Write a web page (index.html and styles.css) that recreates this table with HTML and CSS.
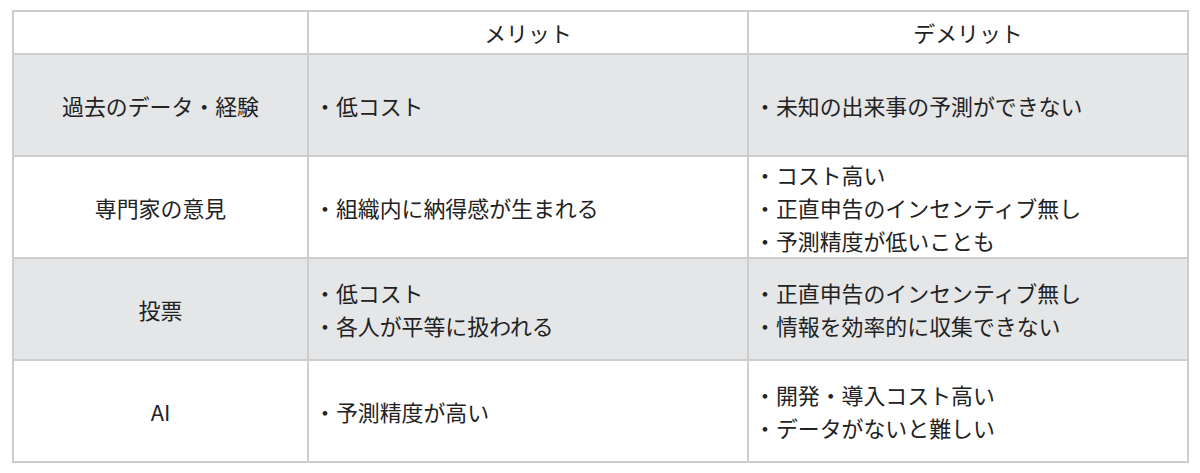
FILE: index.html
```html
<!DOCTYPE html>
<html lang="ja">
<head>
<meta charset="utf-8">
<link rel="stylesheet" href="styles.css">
</head>
<body>
<div class="wrap">
<table class="cmp">
  <colgroup><col class="c1"><col class="c2"><col class="c3"></colgroup>
  <thead>
    <tr class="head"><th></th><th>メリット</th><th>デメリット</th></tr>
  </thead>
  <tbody>
    <tr class="gray">
      <td class="label">過去のデータ・経験</td>
      <td class="list">・低コスト</td>
      <td class="list">・未知の出来事の予測ができない</td>
    </tr>
    <tr>
      <td class="label">専門家の意見</td>
      <td class="list">・組織内に納得感が生まれる</td>
      <td class="list">・コスト高い<br>・正直申告のインセンティブ無し<br>・予測精度が低いことも</td>
    </tr>
    <tr class="gray">
      <td class="label">投票</td>
      <td class="list">・低コスト<br>・各人が平等に扱われる</td>
      <td class="list">・正直申告のインセンティブ無し<br>・情報を効率的に収集できない</td>
    </tr>
    <tr>
      <td class="label">AI</td>
      <td class="list">・予測精度が高い</td>
      <td class="list">・開発・導入コスト高い<br>・データがないと難しい</td>
    </tr>
  </tbody>
</table>
</div>
</body>
</html>
```

FILE: styles.css
```css
html, body {
  margin: 0;
  padding: 0;
  background: #ffffff;
}
.wrap {
  padding: 10px 0 0 12px;
}
.cmp {
  border-collapse: collapse;
  table-layout: fixed;
  width: 1175px;
  font-family: "Noto Sans CJK JP", "Noto Sans", sans-serif;
  font-size: 21.9px;
  line-height: 33px;
  color: #222222;
}
.c1 { width: 295px; }
.c2 { width: 440px; }
.c3 { width: 440px; }
.cmp th, .cmp td {
  border: 2px solid #cdcdcd;
  padding: 0;
  vertical-align: middle;
}
.cmp th {
  font-weight: normal;
  text-align: center;
  height: 40px;
  padding-bottom: 1px;
}
.cmp tbody td {
  height: 100px;
}
.gray td {
  background: #e5e6e8;
}
.label {
  text-align: center;
}
.list {
  text-align: left;
  padding-left: 5px !important;
}
```
